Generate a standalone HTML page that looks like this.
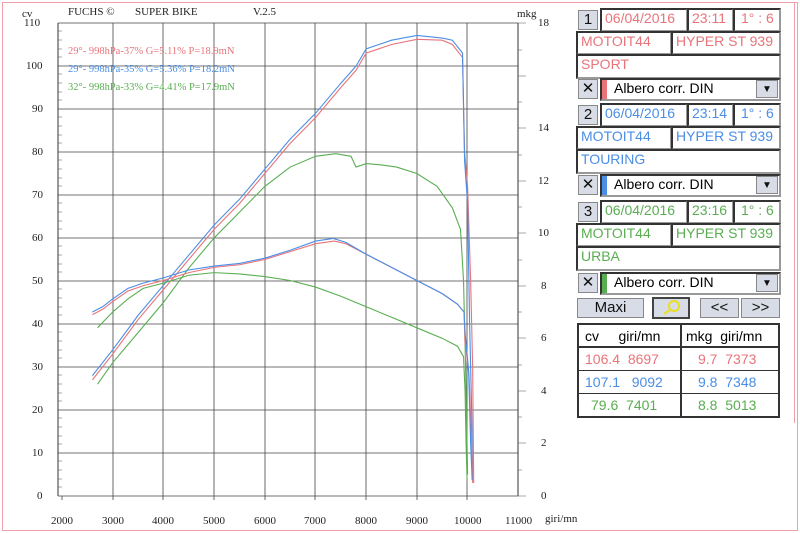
<!DOCTYPE html>
<html><head><meta charset="utf-8"><style>
body{margin:0;width:800px;height:533px;background:#fff;overflow:hidden;position:relative;font-family:"Liberation Sans",sans-serif}
.t{position:absolute;font-family:"Liberation Serif",serif;font-size:11px;color:#222}
.c{position:absolute;border:2px solid #333;border-right-color:#999;border-bottom-color:#999;box-sizing:border-box;background:#fff;font-size:14px;line-height:16px;padding-left:3px;white-space:nowrap;overflow:hidden}
.b{position:absolute;background:#d8dce6;border:1px solid #888;box-sizing:border-box;font-size:15px;text-align:center;line-height:18px;color:#111}
.r{color:#e8747a}.bl{color:#4a8ee6}.g{color:#5aae52}
</style></head><body>
<div style="position:absolute;left:2px;top:2px;width:794px;height:527px;border:1px solid #f0a0a8"></div>
<svg width="800" height="533" style="position:absolute;left:0;top:0">
<g stroke="#333" stroke-width="1" fill="none">
<line x1="58" y1="23" x2="58" y2="496"/><line x1="518" y1="23" x2="518" y2="496"/>
<g stroke="#444" stroke-width="0.8">
<line x1="58" y1="23" x2="518" y2="23"/><line x1="58" y1="66" x2="518" y2="66"/><line x1="58" y1="109" x2="518" y2="109"/><line x1="58" y1="152" x2="518" y2="152"/><line x1="58" y1="195" x2="518" y2="195"/><line x1="58" y1="238" x2="518" y2="238"/><line x1="58" y1="281" x2="518" y2="281"/><line x1="58" y1="324" x2="518" y2="324"/><line x1="58" y1="367" x2="518" y2="367"/><line x1="58" y1="410" x2="518" y2="410"/><line x1="58" y1="453" x2="518" y2="453"/><line x1="58" y1="496" x2="518" y2="496"/>
<line x1="113" y1="23" x2="113" y2="500"/><line x1="163" y1="23" x2="163" y2="500"/><line x1="214" y1="23" x2="214" y2="500"/><line x1="265" y1="23" x2="265" y2="500"/><line x1="315" y1="23" x2="315" y2="500"/><line x1="366" y1="23" x2="366" y2="500"/><line x1="417" y1="23" x2="417" y2="500"/><line x1="467" y1="23" x2="467" y2="500"/><line x1="62" y1="496" x2="62" y2="500"/>
</g>
<g stroke="#555" stroke-width="0.6">
<path d="M58 31h4M58 40h4M58 49h4M58 57h4M58 74h4M58 83h4M58 92h4M58 100h4M58 117h4M58 126h4M58 135h4M58 143h4M58 160h4M58 169h4M58 178h4M58 186h4M58 203h4M58 212h4M58 221h4M58 229h4M58 246h4M58 255h4M58 264h4M58 272h4M58 289h4M58 298h4M58 307h4M58 315h4M58 332h4M58 341h4M58 350h4M58 358h4M58 375h4M58 384h4M58 393h4M58 401h4M58 418h4M58 427h4M58 436h4M58 444h4M58 461h4M58 470h4M58 479h4M58 487h4"/>
<path d="M518 23h8M518 76h8M518 128h8M518 181h8M518 233h8M518 286h8M518 338h8M518 391h8M518 443h8M518 496h8M518 50h4M518 102h4M518 155h4M518 207h4M518 260h4M518 312h4M518 365h4M518 417h4M518 470h4"/>
</g>
</g>
<g fill="none" stroke-width="1.1">
<g transform="translate(-39.4,496) scale(5.07,-4.3)">
<polyline vector-effect="non-scaling-stroke" stroke="#e8747a" points="26,27 30,33 35,41 40,48 45,55 50,62 55,68 60,75 65,82 70,88 75,95 78,99 80,103 85,105 90,106.2 95,106 97,105 99,102 99.4,80 100,72 100.6,50 101,30 101.2,3"/>
<polyline vector-effect="non-scaling-stroke" stroke="#4a8ee6" points="26,28 30,34 35,42 40,49 45,56 50,63 55,69 60,76 65,83 70,89 75,96 78,100 80,104 85,106 90,107.1 95,106.5 97,106 99,103 99.4,78 100,68 100.4,40 100.8,20 101,5"/>
<polyline vector-effect="non-scaling-stroke" stroke="#5aae52" points="27,26 30,31 35,38 40,45 45,53 50,60 55,66 60,72 65,76.5 70,79 74,79.6 77,79 78,76.5 80,77.3 83,77 86,76.5 90,75 94,72 97,67 98.6,62 99.2,50 99.6,30 100,5"/>
</g>
<g transform="translate(-39.4,496) scale(5.07,-26.28)">
<polyline vector-effect="non-scaling-stroke" stroke="#e8747a" points="26,6.9 28,7.1 30,7.4 33,7.8 36,8.0 40,8.2 45,8.5 50,8.7 55,8.8 60,9.0 65,9.3 70,9.6 73.7,9.7 76,9.6 80,9.2 85,8.7 90,8.2 95,7.7 98,7.3 99.3,7.0 99.5,5.8 99.8,5.4 100.3,4.5 100.8,2 101,0.5"/>
<polyline vector-effect="non-scaling-stroke" stroke="#4a8ee6" points="26,7.0 28,7.2 30,7.5 33,7.9 36,8.1 40,8.3 45,8.6 50,8.75 55,8.85 60,9.05 65,9.35 70,9.7 73.5,9.8 76,9.65 80,9.2 85,8.7 90,8.2 95,7.7 98,7.3 99.3,7.0 99.5,6.2 99.8,5.6 100.2,4.8 100.6,2 100.9,0.6"/>
<polyline vector-effect="non-scaling-stroke" stroke="#5aae52" points="27,6.4 30,7.0 33,7.5 36,7.9 40,8.1 45,8.4 50,8.5 55,8.45 60,8.35 65,8.2 70,7.95 75,7.6 80,7.2 85,6.8 90,6.4 95,6.0 98,5.7 99.2,5.3 99.5,4 99.7,2 99.9,0.6"/>
</g>
</g>
</svg>
<div class="t" style="left:22px;top:8px">cv</div>
<div class="t" style="left:68px;top:6px">FUCHS ©</div>
<div class="t" style="left:135px;top:6px">SUPER BIKE</div>
<div class="t" style="left:253px;top:6px">V.2.5</div>
<div class="t" style="left:517px;top:8px">mkg</div>
<div class="t r" style="left:68px;top:46px;font-size:10.5px">29°- 998hPa-37% G=5.11% P=18.9mN</div>
<div class="t bl" style="left:68px;top:64px;font-size:10.5px">29°- 998hPa-35% G=5.36% P=18.2mN</div>
<div class="t g" style="left:68px;top:82px;font-size:10.5px">32°- 998hPa-33% G=4.41% P=17.9mN</div>
<div class="t" style="left:24px;top:17px">110</div>
<div class="t" style="left:26px;top:60px">100</div>
<div class="t" style="left:32px;top:103px">90</div><div class="t" style="left:32px;top:146px">80</div><div class="t" style="left:32px;top:189px">70</div><div class="t" style="left:32px;top:232px">60</div><div class="t" style="left:32px;top:275px">50</div><div class="t" style="left:32px;top:318px">40</div><div class="t" style="left:32px;top:361px">30</div><div class="t" style="left:32px;top:404px">20</div><div class="t" style="left:32px;top:447px">10</div><div class="t" style="left:37px;top:490px">0</div>
<div class="t" style="left:538px;top:17px">18</div><div class="t" style="left:538px;top:122px">14</div><div class="t" style="left:538px;top:175px">12</div><div class="t" style="left:538px;top:227px">10</div><div class="t" style="left:541px;top:280px">8</div><div class="t" style="left:541px;top:332px">6</div><div class="t" style="left:541px;top:385px">4</div><div class="t" style="left:541px;top:437px">2</div><div class="t" style="left:541px;top:490px">0</div>
<div class="t" style="left:51px;top:515px">2000</div><div class="t" style="left:102px;top:515px">3000</div><div class="t" style="left:152px;top:515px">4000</div><div class="t" style="left:203px;top:515px">5000</div><div class="t" style="left:254px;top:515px">6000</div><div class="t" style="left:304px;top:515px">7000</div><div class="t" style="left:355px;top:515px">8000</div><div class="t" style="left:406px;top:515px">9000</div><div class="t" style="left:454px;top:515px">10000</div><div class="t" style="left:505px;top:515px">11000</div>
<div class="t" style="left:545px;top:513px">giri/mn</div>
<div style="position:absolute;left:794px;top:3px;width:1px;height:420px;background:#f0a0a8"></div>

<div class="b" style="left:578px;top:10px;width:20px;height:20px">1</div>
<div class="c r" style="left:600px;top:8px;width:88px;height:24px">06/04/2016</div>
<div class="c r" style="left:687px;top:8px;width:47px;height:24px">23:11</div>
<div class="c r" style="left:733px;top:8px;width:48px;height:24px;padding-left:6px">1° : 6</div>
<div class="c r" style="left:576px;top:31px;width:96px;height:24px">MOTOIT44</div>
<div class="c r" style="left:671px;top:31px;width:110px;height:24px">HYPER ST 939</div>
<div class="c r" style="left:576px;top:54px;width:205px;height:25px">SPORT</div>
<div class="b" style="left:578px;top:79px;width:20px;height:20px">✕</div>
<div class="c" style="left:600px;top:78px;width:181px;height:23px;padding-left:12px">Albero corr. DIN</div>
<div style="position:absolute;left:602px;top:80px;width:5px;height:19px;background:#e8747a"></div>
<div class="b" style="left:756px;top:80px;width:22px;height:18px;font-size:10px">▼</div>

<div class="b" style="left:578px;top:105px;width:20px;height:20px">2</div>
<div class="c bl" style="left:600px;top:103px;width:88px;height:24px">06/04/2016</div>
<div class="c bl" style="left:687px;top:103px;width:47px;height:24px">23:14</div>
<div class="c bl" style="left:733px;top:103px;width:48px;height:24px;padding-left:6px">1° : 6</div>
<div class="c bl" style="left:576px;top:126px;width:96px;height:24px">MOTOIT44</div>
<div class="c bl" style="left:671px;top:126px;width:110px;height:24px">HYPER ST 939</div>
<div class="c bl" style="left:576px;top:149px;width:205px;height:25px">TOURING</div>
<div class="b" style="left:578px;top:175px;width:20px;height:20px">✕</div>
<div class="c" style="left:600px;top:174px;width:181px;height:23px;padding-left:12px">Albero corr. DIN</div>
<div style="position:absolute;left:602px;top:176px;width:5px;height:19px;background:#4a8ee6"></div>
<div class="b" style="left:756px;top:176px;width:22px;height:18px;font-size:10px">▼</div>

<div class="b" style="left:578px;top:202px;width:20px;height:20px">3</div>
<div class="c g" style="left:600px;top:200px;width:88px;height:24px">06/04/2016</div>
<div class="c g" style="left:687px;top:200px;width:47px;height:24px">23:16</div>
<div class="c g" style="left:733px;top:200px;width:48px;height:24px;padding-left:6px">1° : 6</div>
<div class="c g" style="left:576px;top:223px;width:96px;height:24px">MOTOIT44</div>
<div class="c g" style="left:671px;top:223px;width:110px;height:24px">HYPER ST 939</div>
<div class="c g" style="left:576px;top:246px;width:205px;height:25px">URBA</div>
<div class="b" style="left:578px;top:273px;width:20px;height:20px">✕</div>
<div class="c" style="left:600px;top:272px;width:181px;height:23px;padding-left:12px">Albero corr. DIN</div>
<div style="position:absolute;left:602px;top:274px;width:5px;height:19px;background:#5aae52"></div>
<div class="b" style="left:756px;top:274px;width:22px;height:18px;font-size:10px">▼</div>

<div class="b" style="left:577px;top:298px;width:67px;height:20px">Maxi</div>
<div class="b" style="left:652px;top:297px;width:38px;height:22px;border:2px solid #444"><svg width="30" height="16"><circle cx="18" cy="7" r="5" fill="none" stroke="#e8e020" stroke-width="2"/><line x1="14" y1="11" x2="8" y2="15" stroke="#e8e020" stroke-width="2"/></svg></div>
<div class="b" style="left:700px;top:298px;width:39px;height:20px">&lt;&lt;</div>
<div class="b" style="left:741px;top:298px;width:39px;height:20px">&gt;&gt;</div>

<div style="position:absolute;left:577px;top:323px;width:203px;height:95px;border:2px solid #333;box-sizing:border-box;font-size:14px;line-height:22px">
<div style="position:absolute;left:101px;top:0;width:2px;height:100%;background:#333"></div>
<div style="position:absolute;left:0;top:21px;width:100%;height:2px;background:#333"></div>
<div style="position:absolute;left:0;top:45px;width:100%;height:1px;background:#333"></div>
<div style="position:absolute;left:0;top:68px;width:100%;height:1px;background:#333"></div>
<div style="position:absolute;left:6px;top:0">cv&nbsp;&nbsp;&nbsp;&nbsp;&nbsp;giri/mn</div>
<div style="position:absolute;left:107px;top:0">mkg&nbsp;&nbsp;giri/mn</div>
<div class="r" style="position:absolute;left:6px;top:23px">106.4&nbsp;&nbsp;8697</div>
<div class="r" style="position:absolute;left:119px;top:23px">9.7&nbsp;&nbsp;7373</div>
<div class="bl" style="position:absolute;left:6px;top:46px">107.1&nbsp;&nbsp;&nbsp;9092</div>
<div class="bl" style="position:absolute;left:119px;top:46px">9.8&nbsp;&nbsp;7348</div>
<div class="g" style="position:absolute;left:12px;top:69px">79.6&nbsp;&nbsp;7401</div>
<div class="g" style="position:absolute;left:119px;top:69px">8.8&nbsp;&nbsp;5013</div>
</div>
</body></html>
